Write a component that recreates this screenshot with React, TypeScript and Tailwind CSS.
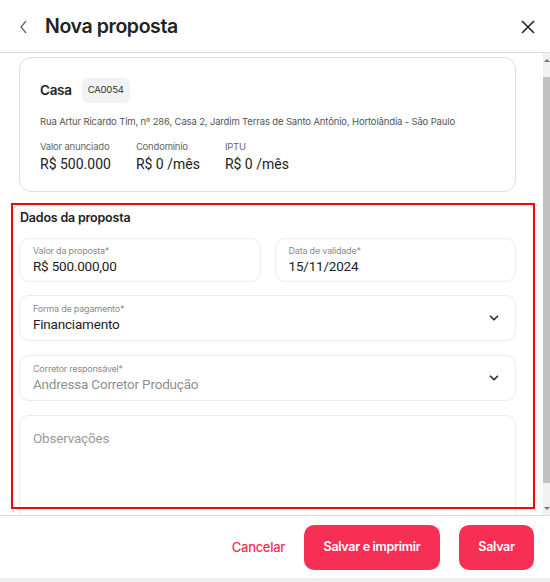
import React from 'react';

const Chevron = () => (
  <svg width="14" height="14" viewBox="0 0 24 24" fill="none" stroke="#333" strokeWidth="3" strokeLinecap="round" strokeLinejoin="round">
    <path d="M6 9l6 6 6-6" />
  </svg>
);

type FieldProps = { label: string; value: string; muted?: boolean; select?: boolean; tall?: boolean };

const Field: React.FC<FieldProps> = ({ label, value, muted, select, tall }) => (
  <div className={`flex items-center rounded-[10px] border border-[#ececec] bg-white pl-[13px] pr-[14px] ${tall ? 'h-[46px]' : 'h-[44px]'}`}>
    <div className="flex-1 flex flex-col">
      <span className="text-[9px] leading-[12px] tracking-[-0.2px] text-[#8a8a8a] font-['Inter',sans-serif]">{label}</span>
      <span className={`text-[13.5px] leading-[18px] tracking-[-0.2px] font-['Roboto',sans-serif] ${muted ? 'text-[#8f8f8f]' : 'text-[#222]'}`}>{value}</span>
    </div>
    {select && <Chevron />}
  </div>
);

const Info: React.FC<{ label: string; value: string }> = ({ label, value }) => (
  <div className="flex flex-col">
    <span className="text-[9.5px] leading-[14px] tracking-[-0.2px] text-[#666]">{label}</span>
    <span className="text-[14px] leading-[20px] text-[#222] font-['Roboto',sans-serif]">{value}</span>
  </div>
);

export default function App() {
  return (
    <div className="relative w-[550px] h-[582px] bg-white flex flex-col overflow-hidden font-['Inter',sans-serif]">
      {/* header */}
      <header className="h-[53px] shrink-0 flex items-center border-b border-[#dcdcdc] pl-[19px] pr-[15px] pt-[1px]">
        <svg width="10" height="14" viewBox="0 0 10 14" fill="none" stroke="#666" strokeWidth="1.3">
          <path d="M7 1L2 7l5 6" />
        </svg>
        <h1 className="ml-[16px] text-[19.5px] font-semibold text-[#222] tracking-[-0.4px]">Nova proposta</h1>
        <svg className="ml-auto" width="14" height="14" viewBox="0 0 14 14" stroke="#222" strokeWidth="1.6">
          <path d="M1 1l12 12M13 1L1 13" />
        </svg>
      </header>

      {/* body */}
      <div className="flex h-[462px] shrink-0 overflow-hidden">
        <div className="flex-1 pl-[19px] pr-[27px] pt-[4px]">
          <div className="rounded-[12px] border border-[#dedede] px-[20px] pt-[20px] pb-[17px]">
            <div className="flex items-center gap-[10px]">
              <span className="text-[13.5px] font-semibold text-[#222] tracking-[-0.3px]">Casa</span>
              <span className="h-[25px] px-[6px] flex items-center rounded-[6px] bg-[#f2f2f2] text-[9.5px] text-[#333] tracking-[-0.2px]">CA0054</span>
            </div>
            <p className="mt-[11px] text-[9.5px] leading-[16px] text-[#555] tracking-[-0.15px]">
              Rua Artur Ricardo Tim, nº 286, Casa 2, Jardim Terras de Santo Antônio, Hortolândia - São Paulo
            </p>
            <div className="mt-[10px] flex gap-[25px]">
              <Info label="Valor anunciado" value="R$ 500.000" />
              <Info label="Condomínio" value="R$ 0 /mês" />
              <Info label="IPTU" value="R$ 0 /mês" />
            </div>
          </div>

          <h2 className="mt-[16px] pl-[1px] text-[12.5px] leading-[20px] font-semibold text-[#222] tracking-[-0.2px]">Dados da proposta</h2>
          <div className="mt-[10px] grid grid-cols-2 gap-[14px]">
            <Field label="Valor da proposta*" value="R$ 500.000,00" />
            <Field label="Data de validade*" value="15/11/2024" />
          </div>
          <div className="mt-[13px]">
            <Field label="Forma de pagamento*" value="Financiamento" select tall />
          </div>
          <div className="mt-[14px]">
            <Field label="Corretor responsável*" value="Andressa Corretor Produção" muted select tall />
          </div>
          <div className="mt-[14px] h-[110px] rounded-[10px] border border-[#ececec] px-[13px] pt-[9px]">
            <span className="text-[13.5px] tracking-[-0.2px] text-[#9a9a9a] font-['Roboto',sans-serif]">Observações</span>
          </div>
        </div>

        {/* scrollbar */}
        <div className="w-[7px] shrink-0 bg-[#f1f1f1] flex flex-col items-center">
          <div className="h-[14px] flex items-center justify-center">
            <div className="w-0 h-0 border-l-[3px] border-r-[3px] border-b-[3px] border-l-transparent border-r-transparent border-b-[#777]" />
          </div>
          <div className="mt-[10px] w-full h-[406px] bg-[#c1c1c1]" />
          <div className="mt-auto h-[14px] flex items-center justify-center">
            <div className="w-0 h-0 border-l-[3px] border-r-[3px] border-t-[3px] border-l-transparent border-r-transparent border-t-[#777]" />
          </div>
        </div>
      </div>

      {/* footer */}
      <footer className="h-[63px] shrink-0 border-t border-[#dcdcdc] flex items-center justify-end pr-[16px] pt-[1px] gap-[19px]">
        <button className="text-[13px] font-medium tracking-[-0.3px] text-[#f72f55]">Cancelar</button>
        <button className="h-[45px] w-[136px] rounded-[10px] bg-[#f72f55] text-white text-[12.5px] font-semibold tracking-[-0.3px]">Salvar e imprimir</button>
        <button className="h-[45px] w-[75px] rounded-[10px] bg-[#f72f55] text-white text-[12.5px] font-semibold tracking-[-0.3px]">Salvar</button>
      </footer>
      <div className="flex-1 bg-[#f0f0f0]" />

      {/* highlight overlay */}
      <div className="absolute left-[11px] top-[203px] w-[524px] h-[306px] border-2 border-[#ff0000] pointer-events-none" />
    </div>
  );
}
